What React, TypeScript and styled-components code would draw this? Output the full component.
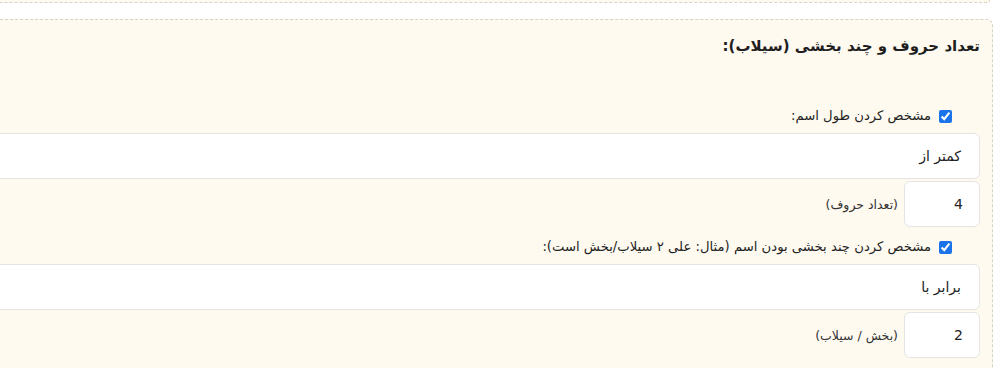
import styled, { createGlobalStyle } from "styled-components";

const GlobalStyle = createGlobalStyle`
  html, body {
    margin: 0;
    padding: 0;
    overflow: hidden;
    background: #ffffff;
  }
  body {
    direction: rtl;
    font-family: "DejaVu Sans", "Noto Sans", sans-serif;
    color: #222;
  }
`;

// wider than the window: in rtl the overflow is cut off on the left
const Page = styled.div`
  width: 1200px;
  padding-right: 7px;
  box-sizing: border-box;
`;

const PrevBox = styled.div`
  height: 2px;
  margin-right: 3px;
  border: 1px dashed #d6d2c8;
  border-top: none;
  border-bottom-right-radius: 6px;
  background: #fefaf0;
`;

const Section = styled.section`
  margin-top: 16px;
  border: 1px dashed #d6d2c8;
  border-bottom: none;
  border-top-right-radius: 6px;
  background: #fefaf0;
  padding: 14px 12px 10px 12px;
`;

const Title = styled.h3`
  margin: 0 0 46px 0;
  font-size: 15px;
  font-weight: bold;
  line-height: 24px;
  color: #1e1e1e;
`;

const CheckRow = styled.label<{ $top: number }>`
  display: flex;
  align-items: center;
  gap: 8px;
  margin: ${(p) => p.$top}px 28px 5px 0;
  font-size: 13.2px;
  line-height: 24px;
  color: #222;

  input {
    margin: 0;
    width: 13px;
    height: 13px;
    accent-color: #1a73e8;
  }
`;

const SelectBox = styled.div`
  height: 44px;
  display: flex;
  align-items: center;
  padding-right: 18px;
  background: #ffffff;
  border: 1px solid #e4e4e4;
  border-radius: 6px;
  font-size: 14px;
  color: #222;
`;

const NumberRow = styled.div`
  display: flex;
  align-items: center;
  gap: 6px;
  margin-top: 2px;
`;

const NumberBox = styled.div`
  width: 58px;
  height: 44px;
  display: flex;
  align-items: center;
  padding-right: 16px;
  background: #ffffff;
  border: 1px solid #e4e4e4;
  border-radius: 6px;
  font-size: 14px;
  color: #222;
`;

const Hint = styled.span`
  font-size: 12.5px;
  color: #333;
`;

export default function App() {
  return (
    <>
      <GlobalStyle />
      <Page>
        <PrevBox />
        <Section>
          <Title>تعداد حروف و چند بخشی (سیلاب):</Title>

          <CheckRow $top={0}>
            <input type="checkbox" defaultChecked />
            <span>مشخص کردن طول اسم:</span>
          </CheckRow>
          <SelectBox>کمتر از</SelectBox>
          <NumberRow>
            <NumberBox>4</NumberBox>
            <Hint>(تعداد حروف)</Hint>
          </NumberRow>

          <CheckRow $top={8}>
            <input type="checkbox" defaultChecked />
            <span>مشخص کردن چند بخشی بودن اسم (مثال: علی ۲ سیلاب/بخش است):</span>
          </CheckRow>
          <SelectBox>برابر با</SelectBox>
          <NumberRow>
            <NumberBox>2</NumberBox>
            <Hint>(بخش / سیلاب)</Hint>
          </NumberRow>
        </Section>
      </Page>
    </>
  );
}
